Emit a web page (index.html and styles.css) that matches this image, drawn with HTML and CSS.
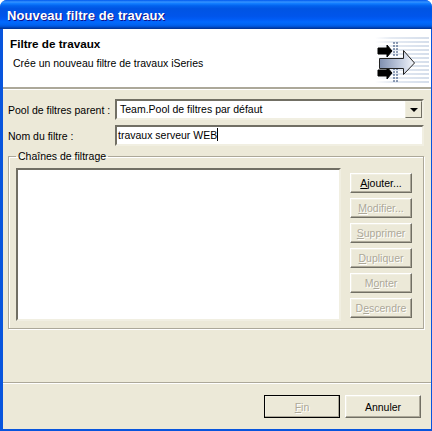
FILE: index.html
```html
<!DOCTYPE html>
<html lang="fr">
  <head>
    <meta charset="UTF-8" />
    <title>Nouveau filtre de travaux</title>
    <link rel="stylesheet" href="styles.css">
  </head>
  <body>
    <div class="window">
      <div class="title-bar">Nouveau filtre de travaux</div>
      <div class="client">
        <div class="banner">
          <div class="banner-text">
            <h1>Filtre de travaux</h1>
            <p>Crée un nouveau filtre de travaux iSeries</p>
          </div>
          <svg class="wizard-icon" width="56" height="52" viewBox="0 0 56 52">
            <defs>
              <linearGradient id="fade" x1="0" x2="1" y1="0" y2="0">
                <stop offset="0" stop-color="#d5deeb" stop-opacity="0" />
                <stop offset="0.3" stop-color="#d5deeb" stop-opacity="0.6" />
                <stop offset="1" stop-color="#d5deeb" />
              </linearGradient>
              <linearGradient id="shaft" x1="0" x2="1" y1="0" y2="0">
                <stop offset="0" stop-color="#7f8fb0" />
                <stop offset="0.6" stop-color="#c3cde0" />
                <stop offset="1" stop-color="#f4f6fa" />
              </linearGradient>
            </defs>
            <g fill="url(#fade)">
              <rect x="2" y="2" width="54" height="2" />
              <rect x="2" y="6" width="54" height="2" />
              <rect x="2" y="10" width="54" height="2" />
              <rect x="2" y="14" width="54" height="2" />
              <rect x="2" y="18" width="54" height="2" />
              <rect x="2" y="22" width="54" height="2" />
              <rect x="2" y="26" width="54" height="2" />
              <rect x="2" y="30" width="54" height="2" />
              <rect x="2" y="34" width="54" height="2" />
              <rect x="2" y="38" width="54" height="2" />
              <rect x="2" y="42" width="54" height="2" />
              <rect x="2" y="46" width="54" height="2" />
            </g>
            <path d="M5 13h9v-3l5 6-5 6v-3H5zM5 35h9v-3l5 6-5 6v-3H5z" fill="#000" stroke="#000" />
            <path d="M21 7v14M24 7v14M21 33v14M24 33v14" stroke="#24406e" stroke-dasharray="2 1" fill="none" />
            <path d="M6.5 23.5H30.5V15.5L41.5 28 30.5 39.5V33.5H6.5z" fill="url(#shaft)" stroke="#222" />
          </svg>
        </div>
        <div class="content">
          <div class="field-row">
            <label class="field-label">Pool de filtres parent :</label>
            <div class="combo">
              <span class="combo-value">Team.Pool de filtres par défaut</span>
              <span class="combo-button"><span class="combo-arrow"></span></span>
            </div>
          </div>
          <div class="field-row name-row">
            <label class="field-label">Nom du filtre :</label>
            <div class="text-field">travaux serveur WEB<span class="caret"></span></div>
          </div>
          <fieldset class="group">
            <legend>Chaînes de filtrage</legend>
            <div class="list-box"></div>
            <div class="side-buttons">
              <button class="btn"><u>A</u>jouter...</button>
              <button class="btn" disabled><u>M</u>odifier...</button>
              <button class="btn" disabled><u>S</u>upprimer</button>
              <button class="btn" disabled><u>D</u>upliquer</button>
              <button class="btn" disabled>M<u>o</u>nter</button>
              <button class="btn" disabled>D<u>e</u>scendre</button>
            </div>
          </fieldset>
        </div>
        <div class="footer">
          <button class="btn btn-wide btn-default" disabled><u>F</u>in</button>
          <button class="btn btn-wide">Annuler</button>
        </div>
      </div>
    </div>
  </body>
</html>
```

FILE: styles.css
```css
html,
body {
  margin: 0;
  padding: 0;
  background-color: #fff;
}
body {
  width: 432px;
  height: 431px;
  overflow: hidden;
  font-family: "Liberation Sans", Arial, sans-serif;
  font-size: 10.5px;
  color: #000;
}
.window {
  display: flex;
  flex-direction: column;
  height: 431px;
  box-sizing: border-box;
  border-radius: 7px 7px 0 0;
  overflow: hidden;
  background-color: #0855dd;
}
.title-bar {
  height: 29px;
  flex: none;
  box-sizing: border-box;
  padding: 8px 0 0 7px;
  font-size: 13px;
  line-height: 15px;
  letter-spacing: 0.1px;
  font-weight: bold;
  color: #fff;
  text-shadow: 1px 1px #0f1089;
  background: linear-gradient(
    #0058ee 0,
    #3593ff 7%,
    #127dff 12%,
    #0262ee 20%,
    #0054e3 30%,
    #0055eb 56%,
    #005bf5 66%,
    #026afe 76%,
    #0062ef 86%,
    #0052d6 92%,
    #0040ab 96%,
    #003092 100%
  );
}
.client {
  flex: 1;
  display: flex;
  flex-direction: column;
  margin: 0 1px 2px 3px;
  background-color: #ece9d8;
}
.banner {
  height: 58px;
  flex: none;
  display: flex;
  justify-content: space-between;
  background-color: #fff;
  border-bottom: 2px solid;
  border-color: #aca899;
  box-shadow: 0 1px #fff;
}
.banner-text {
  padding: 8px 0 0 7px;
}
.banner-text h1 {
  margin: 0;
  font-size: 11.7px;
  font-weight: bold;
  line-height: 14px;
}
.banner-text p {
  margin: 5px 0 0 3px;
  line-height: 14px;
}
.wizard-icon {
  margin: 6px 2px 0 0;
}
.content {
  flex: 1;
  padding: 10px 7px 0 5px;
}
.field-row {
  display: flex;
  align-items: center;
  height: 21px;
}
.name-row {
  margin-top: 5px;
}
.field-label {
  width: 107px;
  flex: none;
}
.combo,
.text-field {
  flex: 1;
  height: 100%;
  box-sizing: border-box;
  border: 2px solid;
  border-color: #716f64 #f1efe2 #f1efe2 #716f64;
  background-color: #fff;
  line-height: 17px;
  padding-left: 1px;
}
.combo {
  display: flex;
  justify-content: space-between;
  padding-left: 3px;
}
.combo-button {
  width: 17px;
  display: flex;
  align-items: center;
  justify-content: center;
  background-color: #ece9d8;
  border: 1px solid;
  border-color: #f1efe2 #716f64 #716f64 #f1efe2;
  box-sizing: border-box;
}
.combo-arrow {
  border: 4px solid transparent;
  border-top-color: #000;
  border-bottom-width: 0;
}
.caret {
  display: inline-block;
  width: 1px;
  height: 13px;
  vertical-align: -2px;
  background-color: #000;
}
.group {
  display: flex;
  margin: 4px 0 0;
  padding: 5px 11px 7px 7px;
  height: 179px;
  box-sizing: border-box;
  border: 1px solid #aca899;
  box-shadow: 1px 1px #fff, inset 1px 1px #fff;
}
.group legend {
  margin-left: 0;
  padding: 0 2px;
  line-height: 13px;
}
.list-box {
  width: 325px;
  flex: none;
  box-sizing: border-box;
  border: 2px solid;
  border-color: #716f64 #f1efe2 #f1efe2 #716f64;
  background-color: #fff;
}
.side-buttons {
  display: flex;
  flex-direction: column;
  gap: 5px;
  margin: 5px 0 0 9px;
}
.btn {
  width: 62px;
  height: 20px;
  padding: 0;
  box-sizing: border-box;
  font-family: "Liberation Sans", Arial, sans-serif;
  font-size: 10.5px;
  color: #000;
  background-color: #ece9d8;
  border: 1px solid;
  border-color: #fff #716f64 #716f64 #fff;
  box-shadow: inset -1px -1px #aca899, inset 1px 1px #f1efe2;
}
.btn:disabled {
  color: #aca899;
  text-shadow: 1px 1px #fff;
}
.footer {
  flex: none;
  height: 47px;
  box-sizing: border-box;
  display: flex;
  justify-content: flex-end;
  gap: 5px;
  padding: 12px 10px 0 0;
  border-top: 1px solid #aca899;
  box-shadow: inset 0 1px #fff;
}
.btn-wide {
  width: 76px;
  height: 23px;
}
.btn-default {
  outline: 1px solid #000;
  outline-offset: -1px;
}
```
